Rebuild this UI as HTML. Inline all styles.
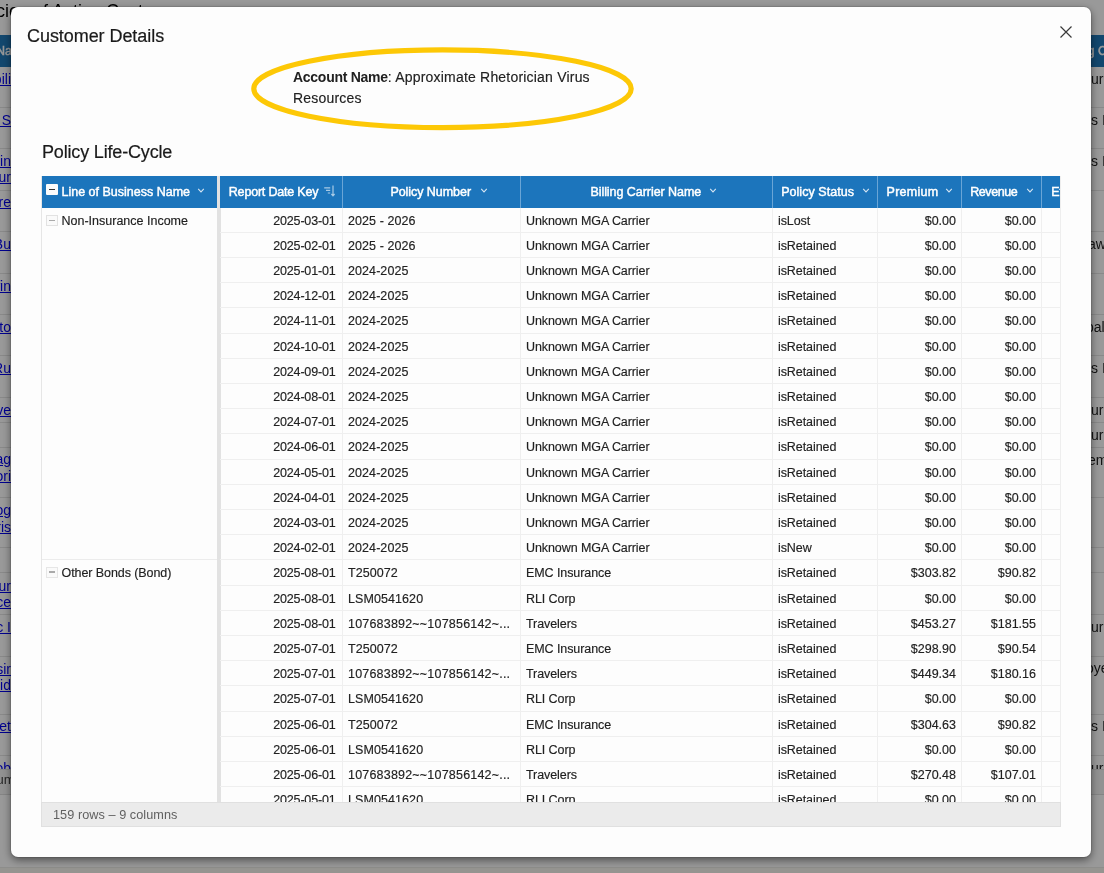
<!DOCTYPE html>
<html lang="en">
<head>
<meta charset="utf-8">
<title>Customer Details</title>
<style>
html,body{margin:0;padding:0;}
body{width:1104px;height:873px;overflow:hidden;position:relative;background:#fff;font-family:"Liberation Sans",Arial,sans-serif;}
.page{position:absolute;left:0;top:0;width:1104px;height:873px;overflow:hidden;background:#fff;color:#222;font-size:14px;}
.pgtitle{position:absolute;left:-34px;top:0;font-size:18px;line-height:22px;white-space:nowrap;color:#000;}
.bh{position:absolute;left:0;top:35px;width:1104px;height:32px;background:#1f77b8;}
.bhl{position:absolute;left:-4px;top:41.5px;font-size:12.5px;line-height:18px;color:#fff;-webkit-text-stroke:0.45px #fff;}
.bhr{position:absolute;left:1087.5px;top:41.5px;font-size:12.5px;line-height:18px;color:#fff;-webkit-text-stroke:0.45px #fff;white-space:nowrap;}
.ll{position:absolute;right:1093px;font-size:14px;line-height:20px;color:#0000ee;text-decoration:underline;white-space:nowrap;}
.lt{position:absolute;right:1093px;font-size:13.5px;line-height:20px;color:#444;white-space:nowrap;}
.rt{position:absolute;left:1091px;font-size:14px;line-height:20px;color:#222;white-space:nowrap;}
.rl{position:absolute;left:0;width:1104px;height:1px;background:#e4e4e4;}
.bfoot{position:absolute;left:0;top:769px;width:1104px;height:26px;background:#f4f4f4;border-top:1px solid #e0e0e0;border-bottom:1px solid #ddd;box-sizing:border-box;}
.bband{position:absolute;left:0;top:867px;width:1104px;height:6px;background:#f8f7f0;border-top:1px solid #ecece8;box-sizing:border-box;}
.backdrop{position:absolute;left:0;top:0;width:1104px;height:873px;background:rgba(0,0,0,0.4);}
.modal{position:absolute;left:11px;top:7px;width:1080px;height:850px;background:#fdfdfd;border-radius:7px;box-shadow:0 0 0 1px rgba(0,0,0,0.09),0 3px 9px rgba(0,0,0,0.5);color:#212121;}
.modal>*{position:absolute;}
.mtitle{left:16px;top:18px;font-size:18px;line-height:22px;white-space:nowrap;color:#1a1a1a;-webkit-text-stroke:0.2px #1a1a1a;letter-spacing:-0.06px;}
.close{left:1049px;top:19px;width:12px;height:12px;}
.ellipse{left:235px;top:35px;width:394px;height:94px;overflow:visible;}
.acct{left:281.5px;top:60.4px;font-size:14px;line-height:21px;white-space:nowrap;color:#212121;letter-spacing:0.2px;}
.acct b{letter-spacing:-0.27px;}
.ptitle{left:31px;top:134px;font-size:18px;line-height:22px;white-space:nowrap;color:#1a1a1a;-webkit-text-stroke:0.2px #1a1a1a;letter-spacing:-0.17px;}
.grid{left:30px;top:169px;width:1020px;height:651px;overflow:hidden;font-size:12.5px;}
.grid>*{position:absolute;}
.pin{left:0;top:0;width:176px;height:626px;background:#fdfdfd;border-left:1px solid #e6e6e6;box-sizing:border-box;}
.ph{position:absolute;left:0;top:0;width:176px;height:32px;background:#1c75bc;color:#fff;}
.box{position:absolute;left:4px;top:7.5px;width:12px;height:11.5px;background:#fbfbfb;border-radius:1px;}
.box i{position:absolute;left:3px;top:5.2px;width:6px;height:1.3px;background:#333;}
.ht{position:absolute;top:0;line-height:33.4px;white-space:nowrap;color:#fff;-webkit-text-stroke:0.45px #fff;}
.chev{position:absolute;top:10.1px;width:8px;height:8px;}
.sorti{position:absolute;top:8.5px;width:12px;height:12px;}
.pg{position:absolute;left:0;width:176px;height:25px;line-height:27.4px;}
.pg1{top:32px;}
.pg2{top:383px;border-top:1px solid #ececec;line-height:26px;}.pg2 .box2{position:absolute;left:4px;top:6.5px;width:9.5px;height:9px;border:1px solid #e6e6e6;background:#fafafa;box-sizing:content-box;}.pg2 .pgt{letter-spacing:-0.08px;}
.box2{position:absolute;left:4px;top:7px;width:10px;height:9px;border:1px solid #e2e2e2;background:#fafafa;box-sizing:content-box;}
.box2 i{position:absolute;left:2px;top:3.6px;width:5.6px;height:1.8px;background:#aaa;}
.pgt{position:absolute;left:19.5px;top:0;white-space:nowrap;}
.sep{left:176px;top:0;width:3.5px;height:626px;background:#e2e2e2;}
.main{left:179px;top:0;width:841px;height:626px;overflow:hidden;box-sizing:border-box;border-right:1px solid #eee;}
.hr{position:absolute;left:0;top:0;height:32px;width:900px;background:#1c75bc;color:#fff;z-index:2;}
.h{position:absolute;top:0;height:32px;box-sizing:border-box;border-left:1px solid #6aa5d6;white-space:nowrap;}
.h.c0{border-left:none;}
.h .ht,.h .chev,.h .sorti{margin-left:0;}
.rows{position:absolute;left:0;top:31.5px;width:900px;}
.r{position:relative;height:25.21px;width:900px;}
.c{position:absolute;top:0;height:100%;box-sizing:border-box;border-bottom:1px solid #efefef;border-left:1px solid #efefef;line-height:27.2px;white-space:nowrap;overflow:hidden;}
.c0{left:0;width:122px;}
.c1{left:122px;width:178px;}
.c2{left:300px;width:252px;}
.c3{left:552px;width:105px;}
.c4{left:657px;width:84px;}
.c5{left:741px;width:80px;}
.c6{left:821px;width:79px;}
.r .c0{border-left:none;text-align:right;padding-right:6.5px;letter-spacing:-0.17px;font-kerning:none;}
.r .c1{padding-left:5px;letter-spacing:0.08px;}
.r .c2,.r .c3{padding-left:5px;letter-spacing:-0.08px;}
.r .c4,.r .c5{text-align:right;padding-right:5px;}
.foot{left:0;top:626px;width:1020px;height:25px;background:#ebebeb;border:1px solid #e0e0e0;box-sizing:border-box;line-height:24px;color:#616161;font-size:12.7px;}
.foot span{position:absolute;left:11px;top:0;white-space:nowrap;letter-spacing:0.05px;}
.r .c1 .tl{letter-spacing:0.2px;}
.grid,.mtitle,.acct{will-change:transform;}
.rows,.pg,.acct span{-webkit-text-stroke:0.15px #212121;}
.page{will-change:transform;}

</style>
</head>
<body>
<div class="page">
  <div class="pgtitle">Policies of Active Customers</div>
  <div class="bh"></div>
  <div class="bhl">Na</div>
  <div class="bhr">g C</div>
  <div class="ll" style="top:68.8px">Mobili</div>
  <div class="ll" style="top:109.7px">Ace S</div>
  <div class="ll" style="top:151.0px">Sprin</div>
  <div class="ll" style="top:166.8px">Labour</div>
  <div class="ll" style="top:192.0px">Store</div>
  <div class="ll" style="top:234.2px">Net Bu</div>
  <div class="ll" style="top:275.7px">Refin</div>
  <div class="ll" style="top:317.2px">Auto</div>
  <div class="ll" style="top:357.9px">Ru</div>
  <div class="ll" style="top:399.5px">Wave</div>
  <div class="ll" style="top:449.2px">Manag</div>
  <div class="ll" style="top:466.2px">Favori</div>
  <div class="ll" style="top:500.2px">Catalog</div>
  <div class="ll" style="top:516.5px">Paris</div>
  <div class="ll" style="top:575.5px">Hour</div>
  <div class="ll" style="top:591.9px">Force</div>
  <div class="ll" style="top:616.8px">Inc I</div>
  <div class="ll" style="top:658.5px">Desir</div>
  <div class="ll" style="top:674.9px">Divid</div>
  <div class="ll" style="top:715.8px">Pallet</div>
  <div class="ll" style="top:757.6px;height:11.4px;overflow:hidden">Glob</div>
  <div class="bfoot"></div>
  <div class="lt" style="top:770.3px;right:1089px">9 colum</div>
  <div class="rt" style="top:68.8px">urance</div>
  <div class="rt" style="top:109.7px">s Inc</div>
  <div class="rt" style="top:151.1px">s Inc</div>
  <div class="rt" style="top:234.2px;left:1088px">away</div>
  <div class="rt" style="top:317.1px;left:1086px">bal</div>
  <div class="rt" style="top:357.8px">s Inc</div>
  <div class="rt" style="top:399.8px">urance</div>
  <div class="rt" style="top:424.6px">urance</div>
  <div class="rt" style="top:449.8px;left:1088px">em</div>
  <div class="rt" style="top:616.8px">urance</div>
  <div class="rt" style="top:658.4px;left:1086px">oyees</div>
  <div class="rt" style="top:715.8px">s Inc</div>
  <div class="rt" style="top:757.6px;height:11.4px;overflow:hidden">urance</div>
  <div class="rl" style="top:107px"></div><div class="rl" style="top:148px"></div><div class="rl" style="top:190px"></div><div class="rl" style="top:231px"></div><div class="rl" style="top:273px"></div><div class="rl" style="top:314px"></div><div class="rl" style="top:355px"></div><div class="rl" style="top:397px"></div><div class="rl" style="top:422px"></div><div class="rl" style="top:447px"></div><div class="rl" style="top:497px"></div><div class="rl" style="top:547px"></div><div class="rl" style="top:572px"></div><div class="rl" style="top:614px"></div><div class="rl" style="top:656px"></div><div class="rl" style="top:714px"></div><div class="rl" style="top:755px"></div>
  <div class="bband"></div>
</div>

<div class="backdrop"></div>
<div class="modal">
  <div class="mtitle">Customer Details</div>
  <svg class="close" viewBox="0 0 12 12"><path d="M0.5 0.5 L11.5 11.5 M11.5 0.5 L0.5 11.5" stroke="#3a3a3a" stroke-width="1.2" fill="none"/></svg>
  <svg class="ellipse" viewBox="0 0 394 94"><ellipse cx="196.5" cy="46.75" rx="188.7" ry="38.8" fill="none" stroke="#fdc806" stroke-width="5.2"/></svg>
  <div class="acct"><b>Account Name</b><span>: Approximate Rhetorician Virus<br>Resources</span></div>
  <div class="ptitle">Policy Life-Cycle</div>
  <div class="grid">
    <div class="pin">
      <div class="ph"><span class="box"><i></i></span><span class="ht" style="left:19.5px;letter-spacing:0px">Line of Business Name</span><svg class="chev" style="left:154.5px" viewBox="0 0 8 8"><path d="M1.2 2.8 L4 5.9 L6.8 2.8" fill="none" stroke="rgba(255,255,255,0.82)" stroke-width="1.05"/></svg></div>
      <div class="pg pg1"><span class="box2"><i></i></span><span class="pgt">Non-Insurance Income</span></div>
      <div class="pg pg2"><span class="box2"><i></i></span><span class="pgt">Other Bonds (Bond)</span></div>
    </div>
    <div class="sep"></div>
    <div class="main">
      <div class="hr">
        <div class="h c0"><span class="ht" style="left:8.8px;letter-spacing:-0.2px">Report Date Key</span><svg class="sorti" style="left:104.0px" viewBox="0 0 12 12"><path d="M0.2 2.8 H6.2 M2 5.4 H6.2 M3.8 8 H6.2 M9 0.5 V10.5 M7.4 9 L9 10.9 L10.6 9" fill="none" stroke="rgba(255,255,255,0.62)" stroke-width="1.2"/></svg></div>
        <div class="h c1"><span class="ht" style="left:47.4px;letter-spacing:-0.05px">Policy Number</span><svg class="chev" style="left:136.7px" viewBox="0 0 8 8"><path d="M1.2 2.8 L4 5.9 L6.8 2.8" fill="none" stroke="rgba(255,255,255,0.82)" stroke-width="1.05"/></svg></div>
        <div class="h c2"><span class="ht" style="left:69.4px;letter-spacing:-0.05px">Billing Carrier Name</span><svg class="chev" style="left:188.4px" viewBox="0 0 8 8"><path d="M1.2 2.8 L4 5.9 L6.8 2.8" fill="none" stroke="rgba(255,255,255,0.82)" stroke-width="1.05"/></svg></div>
        <div class="h c3"><span class="ht" style="left:8.2px;letter-spacing:0.04px">Policy Status</span><svg class="chev" style="left:88.6px" viewBox="0 0 8 8"><path d="M1.2 2.8 L4 5.9 L6.8 2.8" fill="none" stroke="rgba(255,255,255,0.82)" stroke-width="1.05"/></svg></div>
        <div class="h c4"><span class="ht" style="left:8.6px;letter-spacing:0.25px">Premium</span><svg class="chev" style="left:66.7px" viewBox="0 0 8 8"><path d="M1.2 2.8 L4 5.9 L6.8 2.8" fill="none" stroke="rgba(255,255,255,0.82)" stroke-width="1.05"/></svg></div>
        <div class="h c5"><span class="ht" style="left:8.2px;letter-spacing:-0.4px">Revenue</span><svg class="chev" style="left:63.5px" viewBox="0 0 8 8"><path d="M1.2 2.8 L4 5.9 L6.8 2.8" fill="none" stroke="rgba(255,255,255,0.82)" stroke-width="1.05"/></svg></div>
        <div class="h c6"><span class="ht" style="left:9.2px;letter-spacing:0px">Effective Date</span></div>
      </div>
      <div class="rows">
<div class="r"><div class="c c0"><span>2025-03-01</span></div><div class="c c1"><span>2025 - 2026</span></div><div class="c c2"><span>Unknown MGA Carrier</span></div><div class="c c3"><span>isLost</span></div><div class="c c4"><span>$0.00</span></div><div class="c c5"><span>$0.00</span></div><div class="c c6"></div></div>
<div class="r"><div class="c c0"><span>2025-02-01</span></div><div class="c c1"><span>2025 - 2026</span></div><div class="c c2"><span>Unknown MGA Carrier</span></div><div class="c c3"><span>isRetained</span></div><div class="c c4"><span>$0.00</span></div><div class="c c5"><span>$0.00</span></div><div class="c c6"></div></div>
<div class="r"><div class="c c0"><span>2025-01-01</span></div><div class="c c1"><span>2024-2025</span></div><div class="c c2"><span>Unknown MGA Carrier</span></div><div class="c c3"><span>isRetained</span></div><div class="c c4"><span>$0.00</span></div><div class="c c5"><span>$0.00</span></div><div class="c c6"></div></div>
<div class="r"><div class="c c0"><span>2024-12-01</span></div><div class="c c1"><span>2024-2025</span></div><div class="c c2"><span>Unknown MGA Carrier</span></div><div class="c c3"><span>isRetained</span></div><div class="c c4"><span>$0.00</span></div><div class="c c5"><span>$0.00</span></div><div class="c c6"></div></div>
<div class="r"><div class="c c0"><span>2024-11-01</span></div><div class="c c1"><span>2024-2025</span></div><div class="c c2"><span>Unknown MGA Carrier</span></div><div class="c c3"><span>isRetained</span></div><div class="c c4"><span>$0.00</span></div><div class="c c5"><span>$0.00</span></div><div class="c c6"></div></div>
<div class="r"><div class="c c0"><span>2024-10-01</span></div><div class="c c1"><span>2024-2025</span></div><div class="c c2"><span>Unknown MGA Carrier</span></div><div class="c c3"><span>isRetained</span></div><div class="c c4"><span>$0.00</span></div><div class="c c5"><span>$0.00</span></div><div class="c c6"></div></div>
<div class="r"><div class="c c0"><span>2024-09-01</span></div><div class="c c1"><span>2024-2025</span></div><div class="c c2"><span>Unknown MGA Carrier</span></div><div class="c c3"><span>isRetained</span></div><div class="c c4"><span>$0.00</span></div><div class="c c5"><span>$0.00</span></div><div class="c c6"></div></div>
<div class="r"><div class="c c0"><span>2024-08-01</span></div><div class="c c1"><span>2024-2025</span></div><div class="c c2"><span>Unknown MGA Carrier</span></div><div class="c c3"><span>isRetained</span></div><div class="c c4"><span>$0.00</span></div><div class="c c5"><span>$0.00</span></div><div class="c c6"></div></div>
<div class="r"><div class="c c0"><span>2024-07-01</span></div><div class="c c1"><span>2024-2025</span></div><div class="c c2"><span>Unknown MGA Carrier</span></div><div class="c c3"><span>isRetained</span></div><div class="c c4"><span>$0.00</span></div><div class="c c5"><span>$0.00</span></div><div class="c c6"></div></div>
<div class="r"><div class="c c0"><span>2024-06-01</span></div><div class="c c1"><span>2024-2025</span></div><div class="c c2"><span>Unknown MGA Carrier</span></div><div class="c c3"><span>isRetained</span></div><div class="c c4"><span>$0.00</span></div><div class="c c5"><span>$0.00</span></div><div class="c c6"></div></div>
<div class="r"><div class="c c0"><span>2024-05-01</span></div><div class="c c1"><span>2024-2025</span></div><div class="c c2"><span>Unknown MGA Carrier</span></div><div class="c c3"><span>isRetained</span></div><div class="c c4"><span>$0.00</span></div><div class="c c5"><span>$0.00</span></div><div class="c c6"></div></div>
<div class="r"><div class="c c0"><span>2024-04-01</span></div><div class="c c1"><span>2024-2025</span></div><div class="c c2"><span>Unknown MGA Carrier</span></div><div class="c c3"><span>isRetained</span></div><div class="c c4"><span>$0.00</span></div><div class="c c5"><span>$0.00</span></div><div class="c c6"></div></div>
<div class="r"><div class="c c0"><span>2024-03-01</span></div><div class="c c1"><span>2024-2025</span></div><div class="c c2"><span>Unknown MGA Carrier</span></div><div class="c c3"><span>isRetained</span></div><div class="c c4"><span>$0.00</span></div><div class="c c5"><span>$0.00</span></div><div class="c c6"></div></div>
<div class="r"><div class="c c0"><span>2024-02-01</span></div><div class="c c1"><span>2024-2025</span></div><div class="c c2"><span>Unknown MGA Carrier</span></div><div class="c c3"><span>isNew</span></div><div class="c c4"><span>$0.00</span></div><div class="c c5"><span>$0.00</span></div><div class="c c6"></div></div>
<div class="r"><div class="c c0"><span>2025-08-01</span></div><div class="c c1"><span>T250072</span></div><div class="c c2"><span>EMC Insurance</span></div><div class="c c3"><span>isRetained</span></div><div class="c c4"><span>$303.82</span></div><div class="c c5"><span>$90.82</span></div><div class="c c6"></div></div>
<div class="r"><div class="c c0"><span>2025-08-01</span></div><div class="c c1"><span>LSM0541620</span></div><div class="c c2"><span>RLI Corp</span></div><div class="c c3"><span>isRetained</span></div><div class="c c4"><span>$0.00</span></div><div class="c c5"><span>$0.00</span></div><div class="c c6"></div></div>
<div class="r"><div class="c c0"><span>2025-08-01</span></div><div class="c c1"><span class=tl>107683892~~107856142~...</span></div><div class="c c2"><span>Travelers</span></div><div class="c c3"><span>isRetained</span></div><div class="c c4"><span>$453.27</span></div><div class="c c5"><span>$181.55</span></div><div class="c c6"></div></div>
<div class="r"><div class="c c0"><span>2025-07-01</span></div><div class="c c1"><span>T250072</span></div><div class="c c2"><span>EMC Insurance</span></div><div class="c c3"><span>isRetained</span></div><div class="c c4"><span>$298.90</span></div><div class="c c5"><span>$90.54</span></div><div class="c c6"></div></div>
<div class="r"><div class="c c0"><span>2025-07-01</span></div><div class="c c1"><span class=tl>107683892~~107856142~...</span></div><div class="c c2"><span>Travelers</span></div><div class="c c3"><span>isRetained</span></div><div class="c c4"><span>$449.34</span></div><div class="c c5"><span>$180.16</span></div><div class="c c6"></div></div>
<div class="r"><div class="c c0"><span>2025-07-01</span></div><div class="c c1"><span>LSM0541620</span></div><div class="c c2"><span>RLI Corp</span></div><div class="c c3"><span>isRetained</span></div><div class="c c4"><span>$0.00</span></div><div class="c c5"><span>$0.00</span></div><div class="c c6"></div></div>
<div class="r"><div class="c c0"><span>2025-06-01</span></div><div class="c c1"><span>T250072</span></div><div class="c c2"><span>EMC Insurance</span></div><div class="c c3"><span>isRetained</span></div><div class="c c4"><span>$304.63</span></div><div class="c c5"><span>$90.82</span></div><div class="c c6"></div></div>
<div class="r"><div class="c c0"><span>2025-06-01</span></div><div class="c c1"><span>LSM0541620</span></div><div class="c c2"><span>RLI Corp</span></div><div class="c c3"><span>isRetained</span></div><div class="c c4"><span>$0.00</span></div><div class="c c5"><span>$0.00</span></div><div class="c c6"></div></div>
<div class="r"><div class="c c0"><span>2025-06-01</span></div><div class="c c1"><span class=tl>107683892~~107856142~...</span></div><div class="c c2"><span>Travelers</span></div><div class="c c3"><span>isRetained</span></div><div class="c c4"><span>$270.48</span></div><div class="c c5"><span>$107.01</span></div><div class="c c6"></div></div>
<div class="r"><div class="c c0"><span>2025-05-01</span></div><div class="c c1"><span>LSM0541620</span></div><div class="c c2"><span>RLI Corp</span></div><div class="c c3"><span>isRetained</span></div><div class="c c4"><span>$0.00</span></div><div class="c c5"><span>$0.00</span></div><div class="c c6"></div></div>
      </div>
    </div>
    <div class="foot"><span>159 rows – 9 columns</span></div>
  </div>
</div>
</body>
</html>
